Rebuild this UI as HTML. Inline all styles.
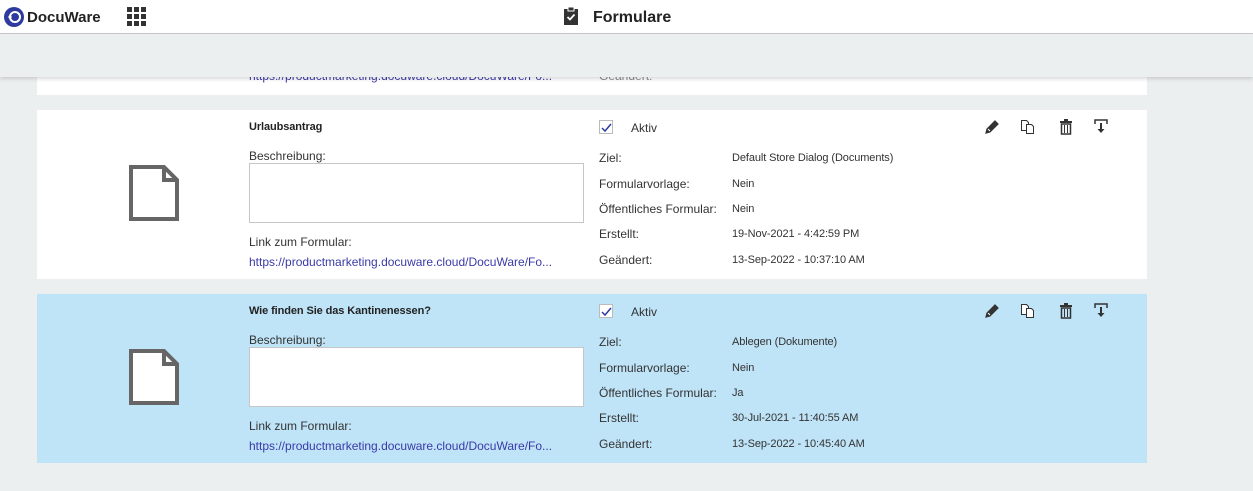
<!DOCTYPE html>
<html><head><meta charset="utf-8"><style>
*{box-sizing:border-box;margin:0;padding:0}
body{width:1253px;height:491px;overflow:hidden;background:#eceff0;font-family:"Liberation Sans",sans-serif;color:#333;position:relative}
.hdr{position:absolute;left:0;top:0;width:1253px;height:34px;background:#fff;border-bottom:1px solid #c8c8c8}
.tb{position:absolute;left:0;top:34px;width:1253px;height:43px;background:#eceff0;box-shadow:0 2px 4px rgba(0,0,0,.15);z-index:5}
.card{position:absolute;left:37px;width:1110px;height:169px;background:#fff}
.t{position:absolute;font-size:12px;white-space:nowrap;margin-top:1px}
.s{font-size:11px;letter-spacing:-.1px}
.ta{position:absolute;left:212px;width:335px;height:60px;border:1px solid #c6c6c6;background:#fff}
.lnk{color:#3a3aa8}
.cb{position:absolute;left:562px;width:14px;height:14px;border:1px solid #bbb;background:#fff}
.ic{position:absolute}
</style></head><body>
<div class="hdr">
<svg style="position:absolute;left:4px;top:7px" width="20" height="20" viewBox="0 0 20 20"><circle cx="10" cy="10" r="10" fill="#2e3a9e"/><circle cx="11" cy="10" r="5" fill="none" stroke="#fff" stroke-width="2"/><circle cx="6" cy="10" r="1.6" fill="#fff"/></svg>
<div class="t" style="left:27px;top:8px;font-size:15px;font-weight:bold;color:#222">DocuWare</div>
<svg style="position:absolute;left:127px;top:7px" width="19" height="19" viewBox="0 0 19 19" fill="#333"><rect x="0" y="0" width="5" height="5"/><rect x="7" y="0" width="5" height="5"/><rect x="14" y="0" width="5" height="5"/><rect x="0" y="7" width="5" height="5"/><rect x="7" y="7" width="5" height="5"/><rect x="14" y="7" width="5" height="5"/><rect x="0" y="14" width="5" height="5"/><rect x="7" y="14" width="5" height="5"/><rect x="14" y="14" width="5" height="5"/></svg>
<svg style="position:absolute;left:564px;top:7px" width="14" height="18" viewBox="0 0 14 18"><rect x="0" y="2" width="14" height="16" fill="#333"/><rect x="4" y="0" width="6" height="4" fill="#333" stroke="#fff" stroke-width="1"/><path d="M3.5 10l2.5 2.5 4.5-5" stroke="#fff" stroke-width="1.8" fill="none"/></svg>
<div class="t" style="left:593px;top:8px;font-size:16px;font-weight:bold;color:#222">Formulare</div>
</div>
<div class="tb"></div>

<div class="card" style="top:50px;height:45px">
<div class="t lnk" style="left:212px;top:18px">https://productmarketing.docuware.cloud/DocuWare/Fo...</div>
<div class="t" style="left:562px;top:18px;color:#888">Geändert:</div>
</div>

<!-- card 2 -->
<div class="card" style="top:110px">
<svg class="ic" style="left:91px;top:54px" width="52" height="58" viewBox="0 0 52 58"><path d="M3 3H36L49 16V55H3Z" fill="#fff" stroke="#666" stroke-width="4"/><path d="M36 3V16H49" fill="none" stroke="#666" stroke-width="4"/></svg>
<div class="t s" style="left:212px;top:10px;font-weight:bold;color:#222">Urlaubsantrag</div>
<div class="t" style="left:212px;top:38px">Beschreibung:</div>
<div class="ta" style="top:53px"></div>
<div class="t" style="left:212px;top:124px">Link zum Formular:</div>
<div class="t lnk" style="left:212px;top:144px">https://productmarketing.docuware.cloud/DocuWare/Fo...</div>
<div class="cb" style="top:10px"><svg width="12" height="12" viewBox="0 0 12 12"><path d="M2 6l3 3 6-7" stroke="#2e3a9e" stroke-width="1.5" fill="none"/></svg></div>
<div class="t" style="left:594px;top:10px">Aktiv</div>
<div class="t" style="left:562px;top:40px">Ziel:</div><div class="t s" style="left:695px;top:41px">Default Store Dialog (Documents)</div>
<div class="t" style="left:562px;top:66px">Formularvorlage:</div><div class="t s" style="left:695px;top:67px">Nein</div>
<div class="t" style="left:562px;top:91px">Öffentliches Formular:</div><div class="t s" style="left:695px;top:92px">Nein</div>
<div class="t" style="left:562px;top:116px">Erstellt:</div><div class="t s" style="left:695px;top:117px">19-Nov-2021 - 4:42:59 PM</div>
<div class="t" style="left:562px;top:142px">Geändert:</div><div class="t s" style="left:695px;top:143px">13-Sep-2022 - 10:37:10 AM</div>
<svg class="ic" style="left:947px;top:9px" width="16" height="16" viewBox="0 0 16 16"><path d="M2 14l1-4 8-8 3 3-8 8z" fill="#333" stroke="#333" stroke-width="1.2"/><path d="M4 10l2 2" stroke="#fff" stroke-width="1"/></svg>
<svg class="ic" style="left:983px;top:9px" width="16" height="16" viewBox="0 0 16 16"><path d="M1.5 1.5h5l2 2v8h-7z" fill="#fff" stroke="#333"/><path d="M6.5 5.5h5l2 2v7h-7z" fill="#fff" stroke="#333"/></svg>
<svg class="ic" style="left:1022px;top:9px" width="14" height="16" viewBox="0 0 14 16"><rect x="1" y="2" width="12" height="2" fill="#333"/><rect x="5" y="0" width="4" height="2" fill="#333"/><path d="M2.5 5h9v10h-9z" fill="none" stroke="#333" stroke-width="1.5"/><path d="M5.5 6v8M8.5 6v8" stroke="#333"/></svg>
<svg class="ic" style="left:1057px;top:9px" width="14" height="16" viewBox="0 0 14 16"><path d="M1 5V1h12v4" fill="none" stroke="#333" stroke-width="1.5"/><path d="M7 4v9" stroke="#333" stroke-width="2"/><path d="M3.5 10l3.5 4 3.5-4z" fill="#333"/></svg>
</div>

<!-- card 3 -->
<div class="card" style="top:294px;background:#bfe3f7">
<svg class="ic" style="left:91px;top:54px" width="52" height="58" viewBox="0 0 52 58"><path d="M3 3H36L49 16V55H3Z" fill="#fff" stroke="#666" stroke-width="4"/><path d="M36 3V16H49" fill="none" stroke="#666" stroke-width="4"/></svg>
<div class="t s" style="left:212px;top:10px;font-weight:bold;color:#222">Wie finden Sie das Kantinenessen?</div>
<div class="t" style="left:212px;top:38px">Beschreibung:</div>
<div class="ta" style="top:53px"></div>
<div class="t" style="left:212px;top:124px">Link zum Formular:</div>
<div class="t lnk" style="left:212px;top:144px">https://productmarketing.docuware.cloud/DocuWare/Fo...</div>
<div class="cb" style="top:10px"><svg width="12" height="12" viewBox="0 0 12 12"><path d="M2 6l3 3 6-7" stroke="#2e3a9e" stroke-width="1.5" fill="none"/></svg></div>
<div class="t" style="left:594px;top:10px">Aktiv</div>
<div class="t" style="left:562px;top:40px">Ziel:</div><div class="t s" style="left:695px;top:41px">Ablegen (Dokumente)</div>
<div class="t" style="left:562px;top:66px">Formularvorlage:</div><div class="t s" style="left:695px;top:67px">Nein</div>
<div class="t" style="left:562px;top:91px">Öffentliches Formular:</div><div class="t s" style="left:695px;top:92px">Ja</div>
<div class="t" style="left:562px;top:116px">Erstellt:</div><div class="t s" style="left:695px;top:117px">30-Jul-2021 - 11:40:55 AM</div>
<div class="t" style="left:562px;top:142px">Geändert:</div><div class="t s" style="left:695px;top:143px">13-Sep-2022 - 10:45:40 AM</div>
<svg class="ic" style="left:947px;top:9px" width="16" height="16" viewBox="0 0 16 16"><path d="M2 14l1-4 8-8 3 3-8 8z" fill="#333" stroke="#333" stroke-width="1.2"/><path d="M4 10l2 2" stroke="#fff" stroke-width="1"/></svg>
<svg class="ic" style="left:983px;top:9px" width="16" height="16" viewBox="0 0 16 16"><path d="M1.5 1.5h5l2 2v8h-7z" fill="#fff" stroke="#333"/><path d="M6.5 5.5h5l2 2v7h-7z" fill="#fff" stroke="#333"/></svg>
<svg class="ic" style="left:1022px;top:9px" width="14" height="16" viewBox="0 0 14 16"><rect x="1" y="2" width="12" height="2" fill="#333"/><rect x="5" y="0" width="4" height="2" fill="#333"/><path d="M2.5 5h9v10h-9z" fill="none" stroke="#333" stroke-width="1.5"/><path d="M5.5 6v8M8.5 6v8" stroke="#333"/></svg>
<svg class="ic" style="left:1057px;top:9px" width="14" height="16" viewBox="0 0 14 16"><path d="M1 5V1h12v4" fill="none" stroke="#333" stroke-width="1.5"/><path d="M7 4v9" stroke="#333" stroke-width="2"/><path d="M3.5 10l3.5 4 3.5-4z" fill="#333"/></svg>
</div>
</body></html>
